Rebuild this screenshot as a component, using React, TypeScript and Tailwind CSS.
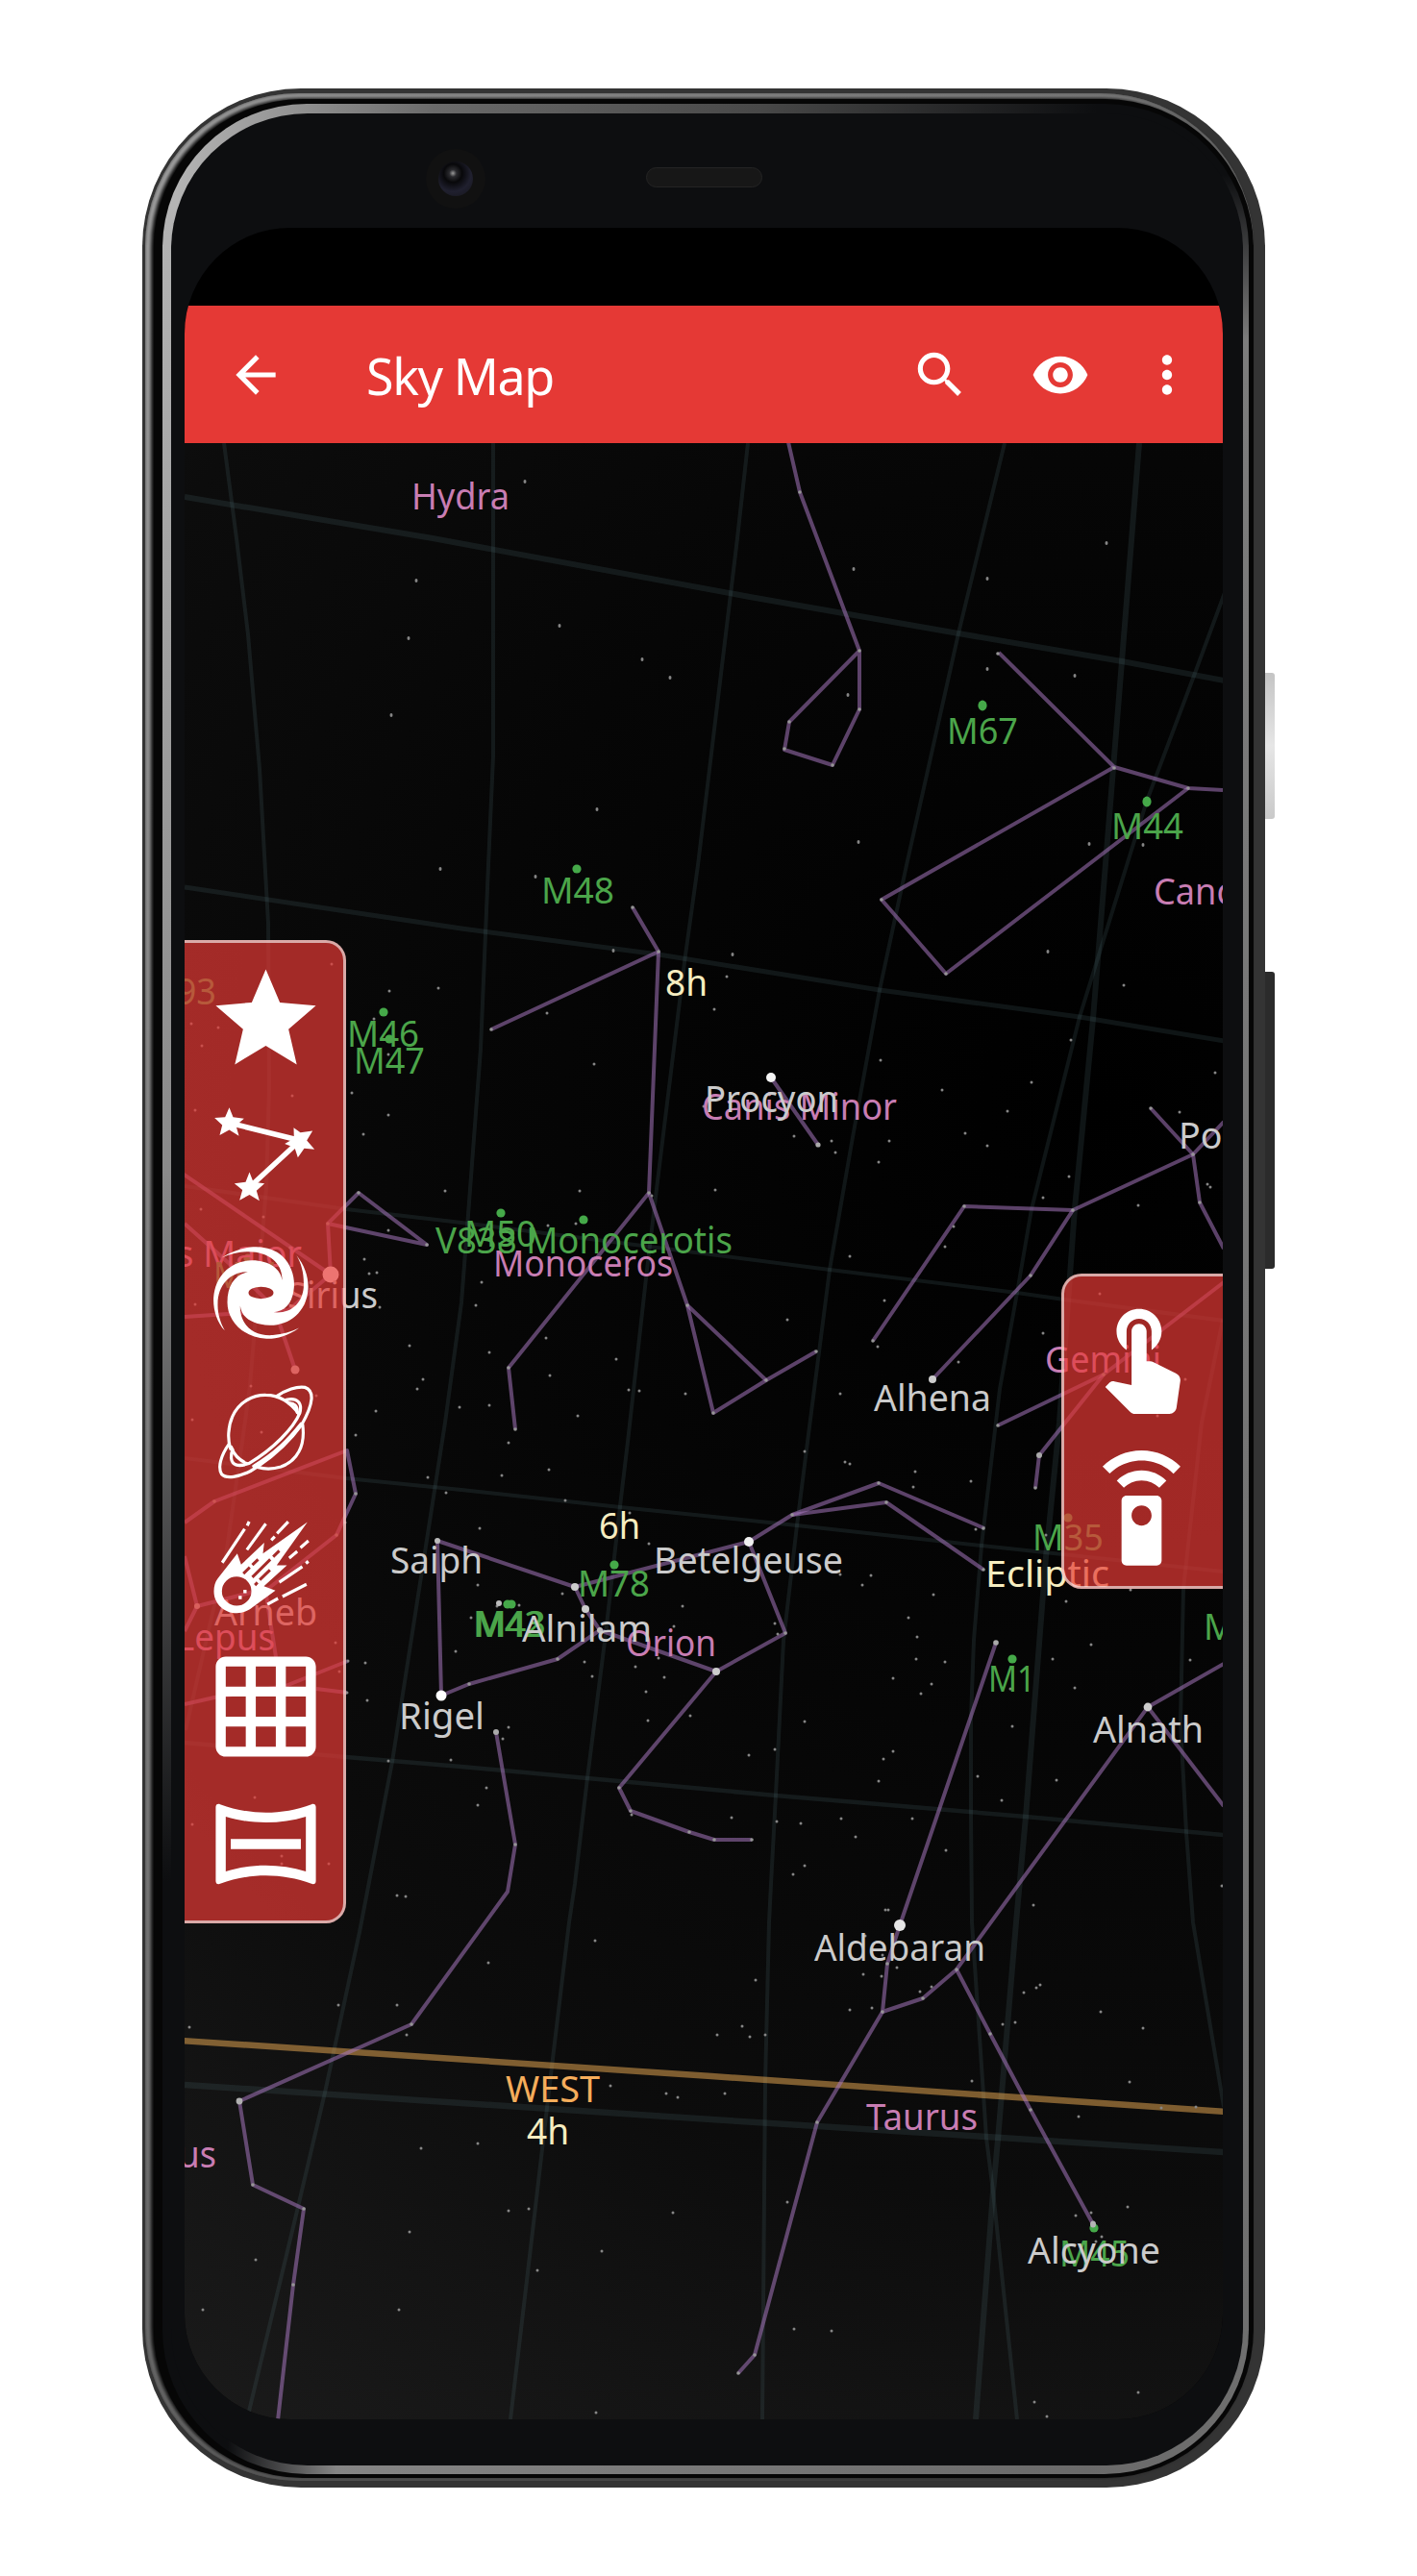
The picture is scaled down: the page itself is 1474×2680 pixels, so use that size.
import React from "react";

type Point = [number, number];

/* Celestial grid: [stroke width, points] */
const GRID: [number, string][] = [
  [4, "233,461 246,560 258,660 270,800 279,960 280,1132 277,1235 260,1442 252,1500 235,1618 193,1800"],
  [4, "513,461 513,787 508,900 500,1091 487,1264 480,1355 463,1480 408,1833 374,2010 338,2177 310,2296 257,2517"],
  [4, "778,461 767,560 726,900 712,1001 683,1237 673,1321 653,1500 645,1567 630,1700 611,1850 598,1960 592,2000 574,2150 557,2296 531,2517"],
  [4, "1045,461 997,659 943,900 915,1030 887,1183 863,1321 840,1500 829,1587 815,1707 807,1867 802,1960 800,2000 796,2167 793,2517"],
  [4, "1275,614 1242,703 1193,833 1123,1058 1073,1258 1058,1345 1040,1445 1021,1608 1013,1706 1010,1788 1010,1886 1011,2000 1026,2224 1033,2280 1058,2517"],
  [6, "1185,461 1167,688 1137,1060 1118,1257 1102,1480 1088,1620 1067,1890 1057,2000 1038,2226 1033,2280 1015,2517"],
  [4, "1272,1373 1250,1480 1231,1653 1228,1792 1234,1906 1241,2000 1273,2192"],
  [6, "192,517 450,560 780,621 997,659 1167,688 1273,708"],
  [5, "192,923 480,966 685,993 915,1030 1123,1058 1273,1083"],
  [4, "192,1234 360,1258 480,1272 863,1321 1058,1345 1107,1352 1273,1374"],
  [4, "192,1517 360,1538 480,1550 645,1568 829,1587 1021,1608 1105,1617 1273,1635"],
  [4.5, "192,1813 360,1828 480,1838 611,1850 807,1868 1067,1890 1273,1909"],
  [6.5, "192,2169 740,2205 1026,2223 1273,2239"],
];

/* Constellation figures */
const FIGURES: string[] = [
  "820,460 832,512 894,677 821,751 816,780 866,796 894,738 894,677",
  "1039,679 1159,798 1236,820 1273,822",
  "1159,798 917,936 984,1013 1236,820",
  "658,944 685,990 511,1071",
  "685,990 675,1241 529,1423 536,1487",
  "675,1241 715,1358 742,1470 797,1436 849,1406",
  "715,1358 797,1436",
  "802,1121 851,1191",
  "908,1395 1003,1255 1116,1259 1241,1201 1273,1167",
  "1197,1153 1241,1201 1248,1251 1273,1299",
  "1116,1259 1072,1327 970,1435",
  "1038,1483 1148,1430 1273,1334",
  "1148,1430 1081,1514 1077,1548",
  "344,1326 341,1273 444,1295 373,1241 341,1273",
  "190,1221 344,1326 300,1363 192,1370",
  "192,1273 240,1316 285,1360 307,1425",
  "192,1584 223,1562 361,1509 370,1554 350,1597 280,1652 205,1671",
  "192,1619 205,1671 192,1697",
  "277,1660 287,1724",
  "192,1773 223,1766 297,1754 362,1728",
  "329,1757 361,1761",
  "598,1651 455,1603 459,1764 488,1752 580,1726 624,1696 609,1674 598,1651 779,1604 817,1699 745,1739 624,1696",
  "745,1739 644,1860 656,1884 717,1906 743,1914 782,1914",
  "779,1604 824,1576 914,1543 1024,1590",
  "824,1576 922,1563 1023,1633",
  "516,1802 536,1919 528,1968 428,2106 249,2186 263,2273 316,2298 305,2377 289,2518",
  "1036,1709 936,2003 923,2043 918,2093 960,2079 995,2049 1194,1776 1273,1731",
  "1194,1776 1273,1879",
  "918,2093 850,2208 785,2450 768,2469",
  "995,2049 1030,2116 1072,2195 1137,2314",
];

const FAINT_STARS: Point[] = [
  [546, 501], [433, 604], [582, 651], [425, 664], [668, 686], [407, 744], [697, 705], [621, 842], [458, 904],
  [1151, 565], [888, 592], [1027, 602], [1118, 703], [1027, 696], [882, 723], [893, 876], [1133, 878], [1189, 879], [1090, 990], [1169, 1025],
  [1114, 1082], [916, 1103], [1073, 1126], [980, 1134], [1048, 1156], [1264, 1116], [1227, 1157], [1004, 1179], [1027, 1192], [925, 1187],
  [914, 1209], [1112, 1224], [1085, 1246], [1184, 1254], [1256, 1232], [1259, 1235], [992, 1276], [983, 1297], [884, 1307], [920, 1353],
  [913, 1401], [1085, 1387], [997, 1417], [874, 1450], [1144, 1346], [865, 1187], [869, 1199], [1233, 1435], [1204, 1473],
  [557, 912], [638, 989], [762, 993], [756, 1016], [743, 1050], [569, 1054], [618, 1107], [732, 1151], [826, 1182], [603, 1239],
  [744, 1238], [599, 1273], [570, 1275], [678, 1244], [501, 1334], [495, 1358], [653, 1320], [568, 1392], [509, 1407], [641, 1414],
  [572, 1431], [509, 1462], [601, 1473], [654, 1446], [665, 1447], [713, 1450], [819, 1373],
  [405, 1031], [456, 1028], [389, 1060], [366, 1137], [404, 1160], [378, 1180], [404, 1097], [463, 1239], [404, 1280], [379, 1310],
  [384, 1325], [392, 1324], [395, 1360], [426, 1400], [440, 1435], [434, 1445], [391, 1468], [478, 1464], [370, 1493], [345, 1003],
  [199, 1065], [227, 1069], [210, 1088], [304, 1140], [203, 1155], [209, 1258], [274, 1266], [261, 1442], [200, 1477], [272, 1490],
  [329, 1452], [203, 1357], [445, 1537], [464, 1553], [474, 1718], [380, 1730], [382, 1769], [404, 1832], [469, 1831], [413, 1972],
  [422, 1973], [359, 1584], [362, 1728], [361, 1761], [349, 1709], [353, 1739], [265, 1870], [200, 1898], [342, 1939], [293, 1939], [293, 1931],
  [522, 1535], [571, 1529], [588, 1561], [499, 1590], [655, 1574], [675, 1606], [497, 1649], [585, 1658], [490, 1683], [710, 1671],
  [701, 1692], [806, 1689], [809, 1700], [608, 1729], [616, 1744], [661, 1734], [691, 1745], [685, 1725], [672, 1760], [674, 1790],
  [718, 1785], [837, 1791], [779, 1826], [806, 1820], [529, 1797], [523, 1809], [506, 1860], [497, 1878], [657, 1888], [761, 1891],
  [808, 1895], [833, 1897], [875, 1892], [837, 1941], [825, 1950], [837, 1510], [879, 1521], [529, 1501], [540, 1670], [517, 1671],
  [884, 1523], [952, 1531], [950, 1547], [1010, 1541], [1015, 1591], [874, 1638], [906, 1639], [897, 1649], [971, 1659], [945, 1683],
  [954, 1703], [953, 1726], [983, 1729], [929, 1746], [969, 1752], [958, 1762], [1109, 1666], [1095, 1726], [1135, 1711], [1118, 1756],
  [1238, 1727], [1051, 1757], [1053, 1796], [929, 1822], [919, 1830], [1017, 1848], [914, 1853], [1099, 1852], [1042, 1873],
  [949, 1892], [890, 1911], [984, 1925], [921, 1987], [924, 1987], [1075, 1982], [1176, 1654], [1271, 1962], [1088, 1597],
  [900, 2014], [786, 2060], [898, 2054], [917, 2056], [933, 2047], [969, 2067], [957, 2072], [1065, 2073], [1078, 2068], [1082, 2065],
  [884, 2091], [907, 2089], [1145, 2093], [772, 2108], [1043, 2106], [1056, 2104], [780, 2119], [746, 2117], [796, 2117], [1189, 2110],
  [1175, 2166], [1011, 2165], [754, 2178], [1208, 2193], [1244, 2192], [1122, 2202], [819, 2291], [1119, 2305], [1135, 2302], [1173, 2296],
  [1146, 2327], [1140, 2332], [826, 2423], [865, 2425], [1076, 2499], [1184, 2489], [1089, 2514], [918, 2034],
  [352, 2086], [413, 2086], [197, 2109], [423, 2117], [508, 2042], [619, 2019], [635, 2170], [693, 2178], [705, 2182], [497, 2230],
  [438, 2235], [529, 2300], [550, 2298], [700, 2302], [426, 2322], [266, 2351], [626, 2342], [559, 2362], [211, 2403], [415, 2403], [620, 2510],
];

/* Stars sitting on the figures' joints */
const JOINT_STARS: Point[] = [
  [832, 512], [894, 677], [821, 751], [816, 779], [866, 796], [894, 738], [1038, 680], [1159, 799], [1236, 820], [917, 936], [984, 1013],
  [658, 944], [685, 990], [511, 1071], [675, 1241], [529, 1423], [536, 1487], [715, 1358], [742, 1470], [797, 1436], [849, 1406],
  [908, 1395], [1003, 1255], [1116, 1259], [1241, 1201], [1197, 1153], [1248, 1251], [1072, 1327], [1038, 1483], [1148, 1430], [1077, 1548],
  [373, 1241], [444, 1295], [341, 1273], [223, 1562], [370, 1554], [350, 1597], [302, 1298], [488, 1752], [580, 1726], [817, 1699], [644, 1860],
  [656, 1884], [717, 1906], [743, 1914], [782, 1914], [824, 1576], [914, 1543], [922, 1563], [1023, 1590], [1023, 1633],
  [536, 1919], [428, 2106], [263, 2273], [316, 2298], [305, 2377], [923, 2043], [918, 2093], [960, 2079], [995, 2049],
  [850, 2208], [785, 2450], [768, 2469], [1030, 2116], [1072, 2195],
];

/* Named and bright stars: x, y, radius, brightness */
const BRIGHT_STARS: [number, number, number, string][] = [
  [802, 1121, 5, "#f5f5f5"],
  [851, 1191, 2.6, "#aaaaaa"],
  [970, 1435, 4, "#cccccc"],
  [1081, 1514, 3, "#aaaaaa"],
  [344, 1326, 8.5, "#ffffff"],
  [307, 1425, 4.5, "#c9c9c9"],
  [205, 1671, 3, "#bbbbbb"],
  [455, 1603, 3, "#bbbbbb"],
  [598, 1651, 4, "#cccccc"],
  [609, 1674, 4, "#cccccc"],
  [624, 1696, 3, "#bbbbbb"],
  [519, 1668, 3, "#bbbbbb"],
  [779, 1604, 5, "#f0f0f0"],
  [745, 1739, 4, "#cccccc"],
  [459, 1764, 5.5, "#ffffff"],
  [516, 1802, 3, "#aaaaaa"],
  [1036, 1709, 2.8, "#aaaaaa"],
  [1194, 1776, 4.4, "#cccccc"],
  [936, 2003, 6, "#e6e6e6"],
  [249, 2186, 3.4, "#b0b0b0"],
];

const MESSIER_DOTS: Point[] = [
  [1022, 734], [1193, 834], [600, 904], [521, 1262], [607, 1269], [399, 1053], [405, 1081], [258, 1309],
  [639, 1628], [528, 1669], [532, 1669], [1111, 1579], [1053, 1726], [1138, 2318],
];

/* Labels: text, left, right, baseline */
type Label = [string, number, number, number];

const CONSTELLATION_LABELS: Label[] = [
  ["Hydra", 430, 528, 530],
  ["Cancer", 1202, 1316, 941],
  ["Canis Minor", 732, 931, 1165],
  ["Monoceros", 515, 698, 1328],
  ["Canis Major", 108, 312, 1318],
  ["Lepus", 185, 284, 1717],
  ["Gemini", 1089, 1206, 1428],
  ["Orion", 653, 743, 1723],
  ["Taurus", 903, 1015, 2216],
  ["Eridanus", 79, 223, 2255],
];

const MESSIER_LABELS: Label[] = [
  ["M67", 987, 1057, 774],
  ["M44", 1158, 1229, 873],
  ["M48", 565, 637, 940],
  ["M50", 485, 556, 1297],
  ["V838 Monocerotis", 455, 760, 1304],
  ["M46", 363, 434, 1089],
  ["M47", 370, 440, 1117],
  ["M93", 153, 223, 1045],
  ["M41", 224, 290, 1340],
  ["M78", 603, 674, 1661],
  ["M42", 494, 564, 1703],
  ["M43", 496, 566, 1703],
  ["M35", 1076, 1146, 1613],
  ["M1", 1030, 1075, 1760],
  ["M37", 1254, 1325, 1706],
  ["M45", 1104, 1173, 2358],
];

const STAR_LABELS: Label[] = [
  ["Procyon", 735, 870, 1157],
  ["Pollux", 1228, 1332, 1195],
  ["Alhena", 911, 1029, 1468],
  ["Sirius", 301, 391, 1361],
  ["Arneb", 225, 328, 1691],
  ["Saiph", 408, 500, 1637],
  ["Rigel", 417, 502, 1799],
  ["Alnilam", 545, 676, 1708],
  ["Betelgeuse", 682, 875, 1637],
  ["Alnath", 1139, 1250, 1813],
  ["Aldebaran", 849, 1023, 2040],
  ["Alcyone", 1071, 1205, 2355],
];

const COORD_LABELS: Label[] = [
  ["8h", 694, 734, 1036],
  ["6h", 625, 664, 1601],
  ["4h", 550, 590, 2231],
  ["Ecliptic", 1027, 1152, 1651],
];

function Labels({ items, fill }: { items: Label[]; fill: string }) {
  return (
    <g fill={fill}>
      {items.map(([text, left, right, y]) => (
        <text key={text} x={left - 2} y={y} textLength={right - left + 4} lengthAdjust="spacingAndGlyphs">
          {text}
        </text>
      ))}
    </g>
  );
}

function SkyChart() {
  return (
    <svg
      viewBox="192 461 1080 2056"
      className="block h-[2056px] w-[1080px] bg-[radial-gradient(1680px_1680px_at_960px_690px,#000_0%,#020202_15%,#060606_40%,#0c0c0c_68%,#131313_82%,#1b1b1b_100%)] font-['Noto_Sans',sans-serif] text-[37.5px]"
    >
      <g fill="none" stroke="#5a7a80" strokeOpacity="0.17">
        {GRID.map(([w, pts]) => (
          <polyline key={pts} points={pts} strokeWidth={w} />
        ))}
      </g>
      <path d="M190 2123L740 2160L1274 2197" fill="none" stroke="#e8a952" strokeOpacity="0.52" strokeWidth="6.5" />
      <g fill="none" stroke="#a577bd" strokeOpacity="0.55" strokeWidth="4" strokeLinejoin="round">
        {FIGURES.map((pts) => (
          <polyline key={pts} points={pts} />
        ))}
      </g>
      <g fill="#868686">
        {FAINT_STARS.map(([x, y], i) => (
          <ellipse key={i} cx={x} cy={y} rx="1.5" ry={y < 1000 ? 2.1 : 1.6} />
        ))}
      </g>
      <g fill="#959595">
        {JOINT_STARS.map(([x, y], i) => (
          <circle key={i} cx={x} cy={y} r="1.8" />
        ))}
      </g>
      <g fill="#45a949">
        {MESSIER_DOTS.map(([x, y], i) => (
          <ellipse key={i} cx={x} cy={y} rx="4.6" ry={y < 900 ? 5.4 : 4.5} />
        ))}
      </g>
      {BRIGHT_STARS.map(([x, y, r, fill]) => (
        <circle key={`${x}-${y}`} cx={x} cy={y} r={r} fill={fill} />
      ))}
      <ellipse cx="1137" cy="2314" rx="3" ry="3.6" fill="#b5b5b5" />
      <Labels items={CONSTELLATION_LABELS} fill="#c87db3" />
      <Labels items={MESSIER_LABELS} fill="#4ba54a" />
      <Labels items={COORD_LABELS} fill="#f6edc0" />
      <Labels items={[["WEST", 528, 622, 2187]]} fill="#f5ad5b" />
      <Labels items={STAR_LABELS} fill="#cbcbcb" />
    </svg>
  );
}

function MaterialIcon({ d, className }: { d: string; className: string }) {
  return (
    <svg viewBox="0 0 24 24" fill="currentColor" className={className}>
      <path d={d} />
    </svg>
  );
}

const BACK = "M20 11H7.83l5.59-5.59L12 4l-8 8 8 8 1.41-1.41L7.83 13H20v-2z";
const SEARCH =
  "M15.5 14h-.79l-.28-.27C15.41 12.59 16 11.11 16 9.5 16 5.91 13.09 3 9.5 3S3 5.91 3 9.5 5.91 16 9.5 16c1.61 0 3.09-.59 4.23-1.57l.27.28v.79l5 4.99L20.49 19l-4.99-5zm-6 0C7.01 14 5 11.99 5 9.5S7.01 5 9.5 5 14 7.01 14 9.5 11.99 14 9.5 14z";
const EYE =
  "M12 4.5C7 4.5 2.73 7.61 1 12c1.73 4.39 6 7.5 11 7.5s9.27-3.11 11-7.5c-1.73-4.39-6-7.5-11-7.5zM12 17c-2.76 0-5-2.24-5-5s2.24-5 5-5 5 2.24 5 5-2.24 5-5 5zm0-8c-1.66 0-3 1.34-3 3s1.34 3 3 3 3-1.34 3-3-1.34-3-3-3z";
const MORE =
  "M12 8c1.1 0 2-.9 2-2s-.9-2-2-2-2 .9-2 2 .9 2 2 2zm0 2c-1.1 0-2 .9-2 2s.9 2 2 2 2-.9 2-2-.9-2-2-2zm0 6c-1.1 0-2 .9-2 2s.9 2 2 2 2-.9 2-2-.9-2-2-2z";
const STAR = "M12 17.27L18.18 21l-1.64-7.03L22 9.24l-7.19-.61L12 2 9.19 8.63 2 9.24l5.46 4.73L5.82 21z";
const GRID_ON =
  "M20 2H4c-1.1 0-2 .9-2 2v16c0 1.1.9 2 2 2h16c1.1 0 2-.9 2-2V4c0-1.1-.9-2-2-2zM8 20H4v-4h4v4zm0-6H4v-4h4v4zm0-6H4V4h4v4zm6 12h-4v-4h4v4zm0-6h-4v-4h4v4zm0-6h-4V4h4v4zm6 12h-4v-4h4v4zm0-6h-4v-4h4v4zm0-6h-4V4h4v4z";
const HORIZON =
  "M20 6.54v10.91c-2.6-.77-5.28-1.16-8-1.16-2.72 0-5.4.39-8 1.16V6.54c2.6.77 5.28 1.16 8 1.16 2.72.01 5.4-.38 8-1.16M21.43 4c-.1 0-.2.02-.31.06C18.18 5.16 15.09 5.7 12 5.7c-3.09 0-6.18-.55-9.12-1.64-.11-.04-.22-.06-.31-.06-.34 0-.57.23-.57.63v14.75c0 .39.23.62.57.62.1 0 .2-.02.31-.06 2.94-1.1 6.03-1.64 9.12-1.64 3.09 0 6.18.55 9.12 1.64.11.04.21.06.31.06.33 0 .57-.23.57-.63V4.63c0-.4-.24-.63-.57-.63zM5 11h14v2H5z";
const TOUCH =
  "M9 11.24V7.5C9 6.12 10.12 5 11.5 5S14 6.12 14 7.5v3.74c1.21-.81 2-2.18 2-3.74C16 5.01 13.99 3 11.5 3S7 5.01 7 7.5c0 1.56.79 2.93 2 3.74zm9.84 4.63l-4.54-2.26c-.17-.07-.35-.11-.54-.11H13v-6c0-.83-.67-1.5-1.5-1.5S10 6.67 10 7.5v10.74l-3.43-.72c-.08-.01-.15-.03-.24-.03-.31 0-.59.13-.79.33l-.79.8 4.94 4.94c.27.27.65.44 1.06.44h6.79c.75 0 1.33-.55 1.44-1.28l.75-5.27c.01-.07.02-.14.02-.2 0-.62-.38-1.16-.91-1.38z";
const REMOTE =
  "M15 9H9c-.55 0-1 .45-1 1v12c0 .55.45 1 1 1h6c.55 0 1-.45 1-1V10c0-.55-.45-1-1-1zm-3 6c-1.1 0-2-.9-2-2s.9-2 2-2 2 .9 2 2-.9 2-2 2zM7.05 6.05l1.41 1.41C9.37 6.56 10.62 6 12 6s2.63.56 3.54 1.46l1.41-1.41C15.68 4.78 13.93 4 12 4s-3.68.78-4.95 2.05zM12 0C8.96 0 6.21 1.23 4.22 3.22l1.41 1.41C7.26 3.01 9.51 2 12 2s4.74 1.01 6.36 2.64l1.41-1.41C17.79 1.23 15.04 0 12 0z";

const TOOL = "block size-[125px] shrink-0 overflow-visible";

function ConstellationIcon() {
  return (
    <svg viewBox="100.5 524 375 363" preserveAspectRatio="none" className={TOOL} fill="#fff">
      <path d="M174 603L395 656L240 795" fill="none" stroke="#fff" strokeWidth="16" />
      <path d="M174 557L186 586L220 590L195 611L204 642L174 624L144 640L152 610L128 588L161 586Z" />
      <path d="M375 618L396 632L434 627L416 656L440 683L408 680L388 708L378 678L347 666L376 650Z" />
      <path d="M237 752L249 782L284 786L259 808L268 838L237 820L206 837L215 806L190 786L225 782Z" />
    </svg>
  );
}

function GalaxyIcon() {
  return (
    <svg viewBox="100.5 939 375 363" preserveAspectRatio="none" className={TOOL} fill="#fff">
      <path
        fillRule="evenodd"
        d="M150 1010C225 965 300 970 340 1006C372 1036 380 1078 375 1108C370 1150 345 1172 312 1175C370 1180 402 1145 406 1100C408 1060 400 1030 384 1003C410 1035 422 1070 420 1105C415 1175 360 1215 300 1214C245 1213 212 1190 208 1155C207 1215 250 1248 310 1244C340 1241 368 1234 392 1222C355 1248 320 1256 290 1255C215 1250 168 1200 168 1145C168 1095 190 1062 232 1053C180 1052 138 1090 138 1150C137 1180 148 1210 160 1230C135 1205 123 1165 125 1130C130 1060 185 1018 245 1018C300 1018 335 1045 339 1078C342 1010 260 965 150 1010ZM234 1116a39 18 0 1 0 78 0a39 18 0 1 0 -78 0Z"
      />
    </svg>
  );
}

function PlanetIcon() {
  return (
    <svg
      viewBox="100.5 1354.5 375 363"
      preserveAspectRatio="none"
      className={TOOL}
      fill="none"
      stroke="#fff"
      strokeWidth="9.5"
      strokeLinecap="round"
    >
      <path d="M178 1588C168 1560 170 1520 184 1490C205 1445 250 1424 288 1425C325 1425 362 1444 391 1482" />
      <path d="M403 1515C412 1580 385 1625 335 1642C312 1649 285 1650 262 1643" />
      <path d="M322 1429C350 1410 385 1398 410 1402C440 1412 438 1450 400 1515C355 1575 300 1620 240 1655C205 1672 165 1680 150 1664C138 1645 146 1610 174 1572" />
      <path d="M352 1440C385 1432 403 1448 394 1480C375 1525 310 1590 235 1632C205 1642 182 1640 180 1615C180 1605 181 1598 184 1590" />
      <path d="M398 1512C358 1560 320 1600 250 1640" />
      <path d="M180 1582C188 1605 202 1620 228 1632" />
      <path d="M360 1450C375 1448 388 1458 386 1478" />
    </svg>
  );
}

function MeteorIcon() {
  return (
    <svg viewBox="100.5 260 375 363" preserveAspectRatio="none" className={TOOL} fill="#fff">
      <path
        fillRule="evenodd"
        d="M138 470L199 394L211 428L283 362L279 394L418 299L322 430L354 430L282 493L318 506L238 563C190 592 126 562 126 508C126 494 130 480 138 470ZM151 508a46 44 0 1 0 92 0a46 44 0 1 0 -92 0Z"
      />
      <path d="M218 504h10v10h-10zM203 522h10v10h-10z" />
      <path
        d="M152 422L222 320M230 310L236 298M229 383L288 304M305 354L316 343M323 334L358 298M361 408L386 388M396 377L421 356M330 481L402 434M413 424L421 418M293 548L326 530M340 524L415 487"
        fill="none"
        stroke="#fff"
        strokeWidth="9.5"
      />
      <path
        d="M218 455L238 436M246 429L264 412M246 466L302 412M311 404L330 386M254 490L262 482M269 474L301 444"
        fill="none"
        stroke="#a42b29"
        strokeWidth="9"
      />
    </svg>
  );
}

function AppBar() {
  return (
    <header className="flex h-[143px] w-full shrink-0 items-center bg-[#e53935] pr-[27px] pl-[43px] text-white">
      <MaterialIcon d={BACK} className="size-[62px]" />
      <h1 className="ml-[84px] flex-1 pt-[2px] font-['Noto_Sans',sans-serif] text-[52px] leading-none tracking-[-1.4px]">Sky Map</h1>
      <MaterialIcon d={SEARCH} className="size-[62px]" />
      <MaterialIcon d={EYE} className="ml-[63px] size-[62px]" />
      <MaterialIcon d={MORE} className="ml-[49px] size-[62px]" />
    </header>
  );
}

function Phone() {
  return (
    <div className="relative h-[2496px] w-[1168px]">
      <div className="absolute top-[608px] left-[1166px] h-[152px] w-[12px] rounded-r-[3px] bg-linear-to-b from-[#c4c4c4] via-[#e6e6e6] to-[#c9c9c9]" />
      <div className="absolute top-[919px] left-[1166px] h-[309px] w-[12px] rounded-r-[3px] bg-[#2b2b2b]" />
      <div className="relative size-full rounded-[165px] bg-[#343434] pt-[5px] pr-[12px] pb-[7px] pl-[3px]">
        <div className="size-full rounded-[160px] bg-[linear-gradient(125deg,#b4b4b4_0%,#8c8c8c_40%,#666_70%,#333_100%)] pt-[6px] pb-[3px] pl-[9px] shadow-[inset_0_0_4px_#333]">
          <div className="size-full rounded-[155px] bg-[#060606] pt-[5px] pr-[5px] pb-[4px] pl-[9px] shadow-[-3px_-1px_4px_#000]">
            <div className="size-full rounded-[150px] bg-[linear-gradient(to_right,#b8b8b8_0%,#6a6a6a_25%,#484848_55%,transparent_86%),linear-gradient(to_right,transparent_6%,#858585_16%,#6a6a6a_85%,#6e6e6e_100%),linear-gradient(to_bottom,#b8b8b8_0%,#8a8a8a_45%,#0d0e10_75%),linear-gradient(to_bottom,#0d0e10_3%,#7c7c7c_10%,#6e6e6e_100%)] bg-[size:100%_100px,100%_100px,50%_100%,50%_100%] bg-[position:left_top,left_bottom,left_top,right_top] bg-no-repeat pt-[10px] pr-[6px] pb-[9px] pl-[9px]">
              <div className="size-full rounded-[142px] bg-[#0d0e10]" />
            </div>
          </div>
        </div>
      </div>
      <div className="absolute top-[63px] left-[295px] flex size-[62px] items-center justify-center rounded-full bg-[#111111]">
        <div className="size-[36px] rounded-full bg-[radial-gradient(circle_at_42%_34%,#9a9a9a_0,#2a2a2e_12%,#08080a_30%,#20202f_60%,#141418_100%)]" />
      </div>
      <div className="absolute top-[82px] left-[524px] h-[21px] w-[121px] rounded-full border border-[#242424] bg-[#171717]" />
      <div className="absolute top-[145px] left-[44px] flex h-[2280px] w-[1080px] flex-col overflow-hidden rounded-[110px] bg-black pt-[81px]">
        <AppBar />
        <div className="relative">
          <SkyChart />
          <div className="absolute top-[517px] -left-[4px] flex h-[1023px] w-[172px] flex-col gap-[18px] rounded-r-[21px] border-[3px] border-white/60 bg-[#e53935]/70 pt-[17px] pl-[23px] text-white">
            <MaterialIcon d={STAR} className={TOOL} />
            <ConstellationIcon />
            <GalaxyIcon />
            <PlanetIcon />
            <MeteorIcon />
            <MaterialIcon d={GRID_ON} className={TOOL} />
            <MaterialIcon d={HORIZON} className={TOOL} />
          </div>
          <div className="absolute top-[864px] left-[912px] flex h-[328px] w-[180px] flex-col gap-[38px] rounded-l-[21px] border-[3px] border-white/60 bg-[#e53935]/70 pt-[18px] pl-[18px] text-white">
            <MaterialIcon d={TOUCH} className={TOOL} />
            <MaterialIcon d={REMOTE} className={TOOL} />
          </div>
        </div>
      </div>
    </div>
  );
}

export default function App() {
  return (
    <main className="h-[2680px] w-[1474px] overflow-hidden bg-white pt-[92px] pl-[148px]">
      <Phone />
    </main>
  );
}
